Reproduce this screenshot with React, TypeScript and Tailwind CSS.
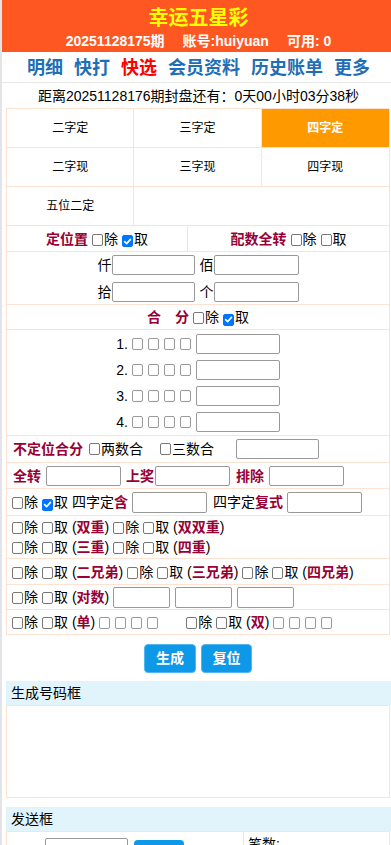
import React from 'react';

const peach = "border-[#fde2d2]";
const inputCls = "h-[20px] border border-[#999] rounded-[2px] bg-white";
const labelRed = "font-bold text-[#990033]";

const Chk = ({ checked = false, className = "" }: { checked?: boolean; className?: string }) => (
    <span
        className={`inline-flex items-center justify-center align-[-2px] w-[11px] h-[12px] rounded-[2px] border ml-[4px] mr-[1px] ${checked ? "bg-[#0075ff] border-[#0075ff]" : "bg-white border-[#777]"} ${className}`}
    >
        {checked && (
            <svg width="9" height="9" viewBox="0 0 10 10">
                <path d="M1.8 5.2 L4 7.4 L8.3 2.6" fill="none" stroke="white" strokeWidth="1.8" strokeLinecap="round" strokeLinejoin="round" />
            </svg>
        )}
    </span>
);

const Sq = () => <span className="inline-block w-[11px] h-[12px] rounded-[2px] border border-[#999] bg-white" />;

const Boxes = () => (
    <span className="inline-flex gap-[5px] align-[-2px]">
        <Sq /><Sq /><Sq /><Sq />
    </span>
);

const Red = ({ children }: { children: React.ReactNode }) => <span className={labelRed}>{children}</span>;

export default function App() {
    const grid = ["二字定", "三字定", "四字定", "二字现", "三字现", "四字现"];

    return (
        <div className="min-h-screen border-l-2 border-[#e4e4e8] bg-white text-[14px] text-black" style={{ fontFamily: '"Liberation Sans", "Noto Sans CJK SC", sans-serif' }}>
            {/* header */}
            <div className="h-[52px] bg-[#ff5722] pl-1 flex flex-col items-center">
                <div className="pt-[6px] text-[20px] leading-[24px] font-bold text-[#ffff00]">幸运五星彩</div>
                <div className="mt-[2px] flex gap-[18px] text-[14px] leading-[18px] font-bold text-white">
                    <span>20251128175期</span>
                    <span>账号:huiyuan</span>
                    <span>可用: 0</span>
                </div>
            </div>

            {/* nav */}
            <div className="h-[31px] pt-[2px] pl-1 flex items-center justify-center gap-[11px] border-b border-[#e8e8e8] text-[18px] font-bold text-[#1e6fb6]">
                <span>明细</span>
                <span>快打</span>
                <span className="text-[#ff0000]">快选</span>
                <span>会员资料</span>
                <span>历史账单</span>
                <span>更多</span>
            </div>

            <div className="h-[25px] pl-1 flex items-center justify-center leading-[18px]">距离20251128176期封盘还有：0天00小时03分38秒</div>

            <div className="pl-[4px] pr-[1px]">
                {/* play types */}
                <div className={`grid grid-cols-3 border-l border-t border-r ${peach} text-[12px]`}>
                    {grid.map((g, i) => (
                        <div
                            key={g}
                            className={`h-[39px] flex items-center justify-center border-b ${peach} ${i % 3 !== 2 ? "border-r" : ""} ${g === "四字定" ? "bg-[#ff9900] text-white font-bold" : ""}`}
                        >
                            {g}
                        </div>
                    ))}
                    <div className={`h-[39px] flex items-center justify-center border-r border-b ${peach}`}>五位二定</div>
                    <div className={`col-span-2 border-b ${peach}`} />
                </div>

                {/* form */}
                <div className={`border-l border-r ${peach} leading-[20px]`}>
                    <div className={`grid grid-cols-[181px_1fr] h-[26px] border-b ${peach}`}>
                        <div className={`flex items-center justify-center border-r ${peach}`}>
                            <span><Red>定位置</Red><Chk />除<Chk checked />取</span>
                        </div>
                        <div className="flex items-center justify-center">
                            <span><Red>配数全转</Red><Chk />除<Chk />取</span>
                        </div>
                    </div>

                    <div className={`pt-[3px] pb-[2px] flex flex-col gap-[7px] border-b ${peach}`}>
                        <div className="flex items-center justify-center">
                            <span>仟</span><span className={`${inputCls} w-[83px]`} />
                            <span className="ml-[5px]">佰</span><span className={`${inputCls} w-[85px]`} />
                        </div>
                        <div className="flex items-center justify-center">
                            <span>拾</span><span className={`${inputCls} w-[83px]`} />
                            <span className="ml-[5px]">个</span><span className={`${inputCls} w-[85px]`} />
                        </div>
                    </div>

                    <div className={`h-[25px] flex items-center justify-center border-b ${peach}`}>
                        <span><Red>合　分</Red><Chk />除<Chk checked />取</span>
                    </div>

                    <div className={`pt-[4px] pb-[3px] flex flex-col gap-[6px] border-b ${peach}`}>
                        {[1, 2, 3, 4].map(n => (
                            <div key={n} className="flex items-center justify-center h-[20px]">
                                <span className="mr-[4px]">{n}.</span>
                                <Boxes />
                                <span className={`${inputCls} w-[84px] ml-[5px]`} />
                            </div>
                        ))}
                    </div>

                    <div className={`h-[27px] pl-[6px] flex items-center border-b ${peach}`}>
                        <Red>不定位合分</Red>
                        <Chk className="ml-[6px]" />两数合
                        <Chk className="ml-[17px]" />三数合
                        <span className={`${inputCls} w-[83px] ml-[22px]`} />
                    </div>

                    <div className={`h-[26px] pl-[6px] flex items-center border-b ${peach}`}>
                        <Red>全转</Red>
                        <span className={`${inputCls} w-[75px] ml-[5px]`} />
                        <span className="ml-[5px]"><Red>上奖</Red></span>
                        <span className={`${inputCls} w-[75px] ml-[1px]`} />
                        <span className="ml-[6px]"><Red>排除</Red></span>
                        <span className={`${inputCls} w-[75px] ml-[5px]`} />
                    </div>

                    <div className={`h-[27px] pl-[1px] flex items-center border-b ${peach}`}>
                        <span><Chk />除<Chk checked />取 四字定<Red>含</Red></span>
                        <span className={`${inputCls} w-[75px] ml-[4px] h-[21px]`} />
                        <span className="ml-[6px]">四字定<Red>复式</Red></span>
                        <span className={`${inputCls} w-[75px] ml-[4px] h-[21px]`} />
                    </div>

                    <div className={`pt-[1px] pb-[1px] pl-[1px] border-b ${peach}`}>
                        <div className="h-[20px]"><Chk />除<Chk />取 (<Red>双重</Red>)<Chk />除<Chk />取 (<Red>双双重</Red>)</div>
                        <div className="h-[20px]"><Chk />除<Chk />取 (<Red>三重</Red>)<Chk />除<Chk />取 (<Red>四重</Red>)</div>
                    </div>

                    <div className={`h-[26px] pl-[1px] flex items-center border-b ${peach}`}>
                        <span><Chk />除<Chk />取 (<Red>二兄弟</Red>)<Chk />除<Chk />取 (<Red>三兄弟</Red>)<Chk />除<Chk />取 (<Red>四兄弟</Red>)</span>
                    </div>

                    <div className={`h-[25px] pl-[1px] flex items-center border-b ${peach}`}>
                        <span><Chk />除<Chk />取 (<Red>对数</Red>)</span>
                        <span className={`${inputCls} w-[57px] h-[21px] ml-[4px]`} />
                        <span className={`${inputCls} w-[57px] h-[21px] ml-[5px]`} />
                        <span className={`${inputCls} w-[57px] h-[21px] ml-[5px]`} />
                    </div>

                    <div className={`h-[25px] pl-[1px] flex items-center border-b ${peach}`}>
                        <span><Chk />除<Chk />取 (<Red>单</Red>) <Boxes /></span>
                        <span className="ml-[24px]"><Chk />除<Chk />取 (<Red>双</Red>) <Boxes /></span>
                    </div>
                </div>

                {/* buttons */}
                <div className="mt-[9px] flex justify-center gap-[5px]">
                    <button className="w-[52px] h-[29px] rounded-[4px] bg-[#0e98e8] border border-[#52b6f0] text-white text-[14px] font-bold">生成</button>
                    <button className="w-[51px] h-[29px] rounded-[4px] bg-[#0e98e8] border border-[#52b6f0] text-white text-[14px] font-bold">复位</button>
                </div>

                {/* generated numbers */}
                <div className="mt-[8px] h-[24px] bg-[#e1f4fc] px-[5px] flex items-center -mr-[1px]">生成号码框</div>
                <div className={`h-[93px] border ${peach}`} />

                {/* send box */}
                <div className="mt-[9px] h-[24px] bg-[#e1f4fc] px-[5px] flex items-center -mr-[1px]">发送框</div>
                <div className={`h-[40px] border ${peach} flex`}>
                    <div className={`w-[237px] border-r ${peach} flex items-start pt-[6px]`}>
                        <span className={`${inputCls} w-[83px] ml-[38px] h-[22px]`} />
                        <span className="ml-[6px] mt-[2px] w-[50px] h-[24px] rounded-[4px] bg-[#0e98e8]" />
                    </div>
                    <div className="pl-[4px] pt-[2px]">笔数:</div>
                </div>
            </div>
        </div>
    );
}
